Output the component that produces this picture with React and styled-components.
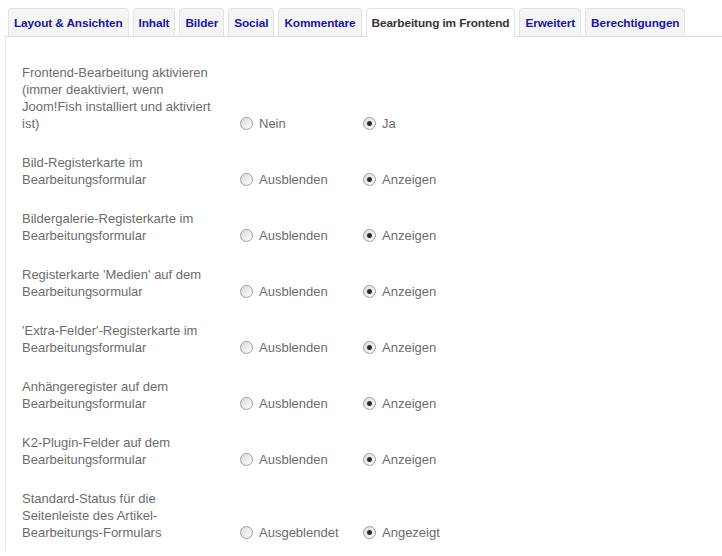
import styled, { createGlobalStyle } from "styled-components";

const GlobalStyle = createGlobalStyle`
  body {
    margin: 0;
    background: #fff;
    font-family: "Liberation Sans", Arial, sans-serif;
  }
`;

const tabs = [
  "Layout & Ansichten",
  "Inhalt",
  "Bilder",
  "Social",
  "Kommentare",
  "Bearbeitung im Frontend",
  "Erweitert",
  "Berechtigungen",
];

// label lines are broken the way the form shows them
const rows = [
  {
    label: ["Frontend-Bearbeitung aktivieren", "(immer deaktiviert, wenn", "Joom!Fish installiert und aktiviert", "ist)"],
    off: "Nein",
    on: "Ja",
  },
  { label: ["Bild-Registerkarte im", "Bearbeitungsformular"], off: "Ausblenden", on: "Anzeigen" },
  { label: ["Bildergalerie-Registerkarte im", "Bearbeitungsformular"], off: "Ausblenden", on: "Anzeigen" },
  { label: ["Registerkarte 'Medien' auf dem", "Bearbeitungsormular"], off: "Ausblenden", on: "Anzeigen" },
  { label: ["'Extra-Felder'-Registerkarte im", "Bearbeitungsformular"], off: "Ausblenden", on: "Anzeigen" },
  { label: ["Anhängeregister auf dem", "Bearbeitungsformular"], off: "Ausblenden", on: "Anzeigen" },
  { label: ["K2-Plugin-Felder auf dem", "Bearbeitungsformular"], off: "Ausblenden", on: "Anzeigen" },
  {
    label: ["Standard-Status für die", "Seitenleiste des Artikel-", "Bearbeitungs-Formulars"],
    off: "Ausgeblendet",
    on: "Angezeigt",
  },
];

const Page = styled.div`
  padding: 8px 0 0 5px;
`;

const TabBar = styled.div`
  display: flex;
  gap: 4px;
  padding-left: 3px;
  border-bottom: 1px solid #dedede;
`;

const Tab = styled.div`
  padding: 0 5px;
  display: flex;
  align-items: center;
  border: 1px solid #e2e2e2;
  border-bottom: none;
  border-radius: 4px 4px 0 0;
  background: ${(p) => (p.$active ? "#fff" : "#f4f4f4")};
  color: ${(p) => (p.$active ? "#333" : "#1515a8")};
  font-size: 11.8px;
  font-weight: bold;
  letter-spacing: -0.1px;
  white-space: nowrap;
  margin-bottom: ${(p) => (p.$active ? "-1px" : "0")};
  height: ${(p) => (p.$active ? "28px" : "27px")};
`;

const Panel = styled.div`
  border-left: 1px solid #e6e6e6;
  padding: 27px 0 9px 16px;
  display: flex;
  flex-direction: column;
  gap: 22px;
`;

const Row = styled.div`
  display: grid;
  grid-template-columns: 218px 123px 123px;
  align-items: end;
  font-size: 13px;
  line-height: 17px;
  color: #6c6c6c;
`;

const Label = styled.div`
  white-space: nowrap;
`;

const Line = styled.div``;

const Option = styled.label`
  display: flex;
  align-items: center;
  gap: 6px;
  white-space: nowrap;
`;

const Radio = styled.span`
  width: 11px;
  height: 11px;
  border-radius: 50%;
  border: 1px solid #9c9c9c;
  background: linear-gradient(135deg, #dcdcdc, #fdfdfd);
  display: flex;
  align-items: center;
  justify-content: center;

  &::after {
    content: "";
    width: 5px;
    height: 5px;
    border-radius: 50%;
    background: ${(p) => (p.$checked ? "#2a2a2a" : "transparent")};
  }
`;

export default function App() {
  return (
    <Page>
      <GlobalStyle />
      <TabBar>
        {tabs.map((t) => (
          <Tab key={t} $active={t === "Bearbeitung im Frontend"}>
            {t}
          </Tab>
        ))}
      </TabBar>
      <Panel>
        {rows.map((r) => (
          <Row key={r.label[0]}>
            <Label>
              {r.label.map((l) => (
                <Line key={l}>{l}</Line>
              ))}
            </Label>
            <Option>
              <Radio />
              {r.off}
            </Option>
            <Option>
              <Radio $checked />
              {r.on}
            </Option>
          </Row>
        ))}
      </Panel>
    </Page>
  );
}
